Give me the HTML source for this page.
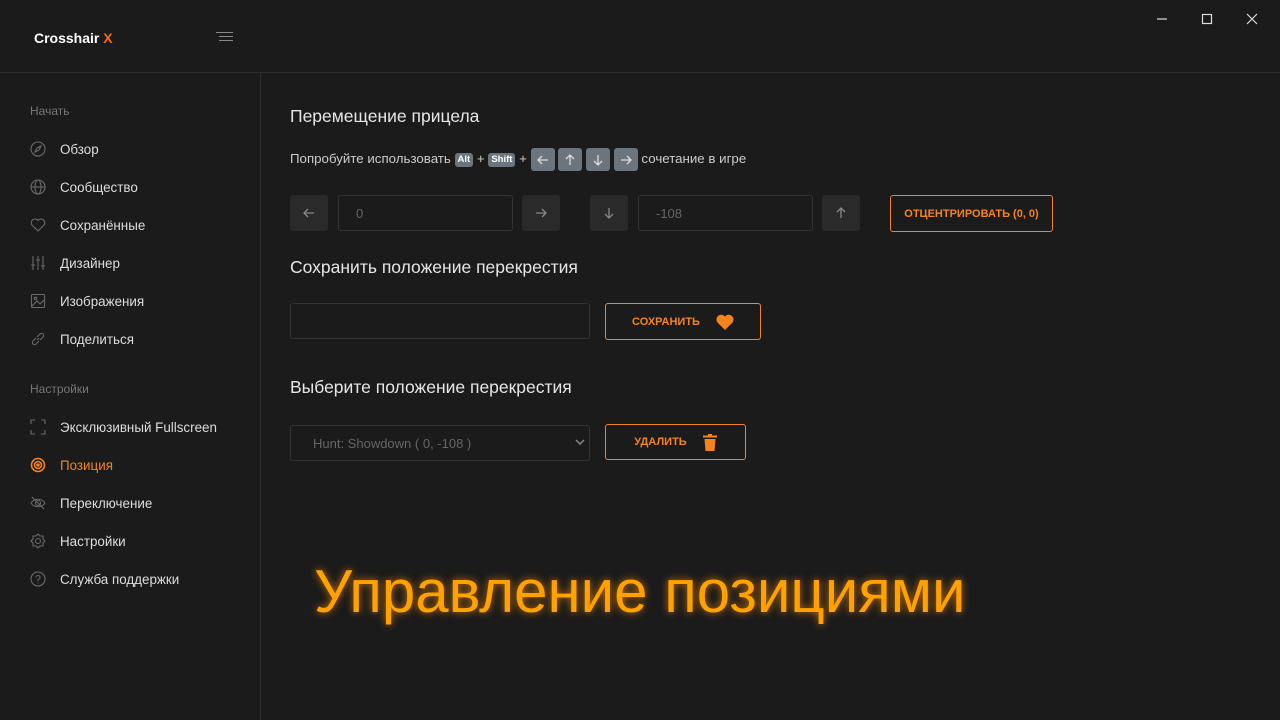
<!DOCTYPE html>
<html><head><meta charset="utf-8"><style>
*{margin:0;padding:0;box-sizing:border-box}
body{width:1280px;height:720px;background:#1b1b1b;font-family:"Liberation Sans",sans-serif;color:#ddd;position:relative;overflow:hidden}
.abs{position:absolute}
.hline{left:0;top:72px;width:1280px;height:1px;background:#2e2e2e}
.vline{left:260px;top:72px;width:1px;height:648px;background:#2e2e2e}
.logo{left:34px;top:30px;font-weight:bold;font-size:14px;color:#fff}
.logo b{color:#f26b1d}
.sec{left:30px;font-size:12px;color:#777}
.item{left:30px;font-size:13.4px;color:#ddd;display:flex;align-items:center;height:20px}
.item svg{width:16px;height:16px;margin-right:14px;stroke:#6a6a6a;fill:none;stroke-width:1.1}
.item.act{color:#f5841f}.item.act svg{stroke:#f5841f}
h2{position:absolute;left:290px;font-size:17.5px;font-weight:normal;color:#e6e6e6}
.kbd{display:inline-block;background:#6c757d;color:#fff;font-size:9.5px;font-weight:bold;border-radius:3px;padding:0 3px;line-height:14px;height:14px;vertical-align:middle}
.ak{display:inline-flex;width:24px;height:23px;background:#6c757d;border-radius:3px;align-items:center;justify-content:center;vertical-align:middle}
.sq{width:38px;height:36px;background:#2a2a2a;border-radius:3px;display:flex;align-items:center;justify-content:center}
.inp{height:36px;border:1px solid #333;border-radius:3px;color:#666;font-size:13px;padding:10px 17px}
.btn{border:1px solid #f5841f;border-radius:3px;color:#f5841f;font-size:11px;font-weight:bold;display:flex;align-items:center;justify-content:center}
.big{left:314px;top:557px;font-size:60px;color:#ffa200;text-shadow:0 0 8px rgba(255,140,0,.8);letter-spacing:0}
</style></head><body>
<svg width="0" height="0" style="position:absolute"><defs>
<path id="ar" d="M-5 0H5M1 -4L5 0 1 4" fill="none" stroke-width="1.3"/></defs></svg>
<div class="abs logo">Crosshair <b>X</b></div>
<svg class="abs" style="left:216px;top:31px" width="18" height="12" stroke="#888" stroke-width="1"><path d="M0 1.5H17M3 5.5H17M3 9.5H17"/></svg>
<svg class="abs" style="left:1157px;top:13px" width="110" height="12" stroke="#ddd" stroke-width="1.2" fill="none"><path d="M0 6H10"/><rect x="45.5" y="1.5" width="9" height="9"/><path d="M90 1L100 11M100 1L90 11"/></svg>
<div class="abs hline"></div><div class="abs vline"></div>

<div class="abs sec" style="top:104px">Начать</div>
<div class="abs item" style="top:139px"><svg viewBox="0 0 16 16"><circle cx="8" cy="8" r="7"/><path d="M11 5L9 9 5 11 7 7Z"/></svg>Обзор</div>
<div class="abs item" style="top:177px"><svg viewBox="0 0 16 16"><circle cx="8" cy="8" r="7"/><ellipse cx="8" cy="8" rx="3" ry="7"/><path d="M1 8H15"/></svg>Сообщество</div>
<div class="abs item" style="top:215px"><svg viewBox="0 0 16 16"><path d="M8 14L2 8A3.5 3.5 0 0 1 8 3.5 3.5 3.5 0 0 1 14 8Z"/></svg>Сохранённые</div>
<div class="abs item" style="top:253px"><svg viewBox="0 0 16 16"><path d="M3 1V15M8 1V15M13 1V15M1 10H5M6 5H10M11 11H15"/></svg>Дизайнер</div>
<div class="abs item" style="top:291px"><svg viewBox="0 0 16 16"><rect x="1.5" y="1.5" width="13" height="13" rx="1"/><circle cx="5.5" cy="5.5" r="1.3"/><path d="M2 13L7 8 10 11 14 7"/></svg>Изображения</div>
<div class="abs item" style="top:329px"><svg viewBox="0 0 16 16"><path d="M7 9L9 7M6 7L3 10A2 2 0 0 0 6 13L9 10M10 9L13 6A2 2 0 0 0 10 3L7 6"/></svg>Поделиться</div>

<div class="abs sec" style="top:382px">Настройки</div>
<div class="abs item" style="top:417px"><svg viewBox="0 0 16 16"><path d="M1 5V1H5M11 1H15V5M15 11V15H11M5 15H1V11"/></svg>Эксклюзивный Fullscreen</div>
<div class="abs item act" style="top:455px"><svg viewBox="0 0 16 16" style="stroke-width:1.6"><circle cx="8" cy="8" r="6.5"/><circle cx="8" cy="8" r="3.5"/><circle cx="8" cy="8" r="1" fill="#f5841f"/></svg>Позиция</div>
<div class="abs item" style="top:493px"><svg viewBox="0 0 16 16"><path d="M1 8C4 3 12 3 15 8 12 13 4 13 1 8ZM2 2L14 14"/><circle cx="8" cy="8" r="2.5"/></svg>Переключение</div>
<div class="abs item" style="top:531px"><svg viewBox="0 0 16 16"><circle cx="8" cy="8" r="2.5"/><path d="M8 1L10 3 13 3 13 6 15 8 13 10 13 13 10 13 8 15 6 13 3 13 3 10 1 8 3 6 3 3 6 3Z"/></svg>Настройки</div>
<div class="abs item" style="top:569px"><svg viewBox="0 0 16 16"><circle cx="8" cy="8" r="7"/><path d="M6 6.5A2 2 0 1 1 8 8.5V10M8 11.5V12.5"/></svg>Служба поддержки</div>

<h2 style="top:106px">Перемещение прицела</h2>
<div class="abs" style="left:290px;top:148px;font-size:13.3px;color:#ccc;line-height:22px;white-space:nowrap">Попробуйте использовать <span class="kbd">Alt</span> + <span class="kbd">Shift</span> + <span class="ak"><svg width="12" height="12" stroke="#ddd"><use href="#ar" transform="translate(6 6) rotate(180)"/></svg></span> <span class="ak"><svg width="12" height="12" stroke="#ddd"><use href="#ar" transform="translate(6 6) rotate(-90)"/></svg></span> <span class="ak"><svg width="12" height="12" stroke="#ddd"><use href="#ar" transform="translate(6 6) rotate(90)"/></svg></span> <span class="ak"><svg width="12" height="12" stroke="#ddd"><use href="#ar" transform="translate(6 6)"/></svg></span> сочетание в игре</div>

<div class="abs sq" style="left:290px;top:195px"><svg width="12" height="12" stroke="#888"><use href="#ar" transform="translate(6 6) rotate(180)"/></svg></div>
<div class="abs inp" style="left:338px;top:195px;width:175px">0</div>
<div class="abs sq" style="left:522px;top:195px"><svg width="12" height="12" stroke="#888"><use href="#ar" transform="translate(6 6)"/></svg></div>
<div class="abs sq" style="left:590px;top:195px"><svg width="12" height="12" stroke="#888"><use href="#ar" transform="translate(6 6) rotate(90)"/></svg></div>
<div class="abs inp" style="left:638px;top:195px;width:175px">-108</div>
<div class="abs sq" style="left:822px;top:195px"><svg width="12" height="12" stroke="#888"><use href="#ar" transform="translate(6 6) rotate(-90)"/></svg></div>
<div class="abs btn" style="left:890px;top:195px;width:163px;height:37px">ОТЦЕНТРИРОВАТЬ (0, 0)</div>

<h2 style="top:257px">Сохранить положение перекрестия</h2>
<div class="abs inp" style="left:290px;top:303px;width:300px"></div>
<div class="abs btn" style="left:605px;top:303px;width:156px;height:37px">СОХРАНИТЬ<svg style="margin-left:16px" width="18" height="16" viewBox="0 0 18 16"><path fill="#f5841f" d="M9 16L1.5 8.5A4.3 4.3 0 0 1 9 2.5 4.3 4.3 0 0 1 16.5 8.5Z"/></svg></div>

<h2 style="top:377px">Выберите положение перекрестия</h2>
<div class="abs inp" style="left:290px;top:425px;width:300px;color:#666;padding-left:22px">Hunt: Showdown ( 0, -108 )</div>
<svg class="abs" style="left:575px;top:438px" width="10" height="8" stroke="#888" fill="none" stroke-width="1.5"><path d="M1 2L5 6 9 2"/></svg>
<div class="abs btn" style="left:605px;top:424px;width:141px;height:36px">УДАЛИТЬ<svg style="margin-left:16px" width="14" height="17" viewBox="0 0 14 17"><path fill="#f5841f" d="M5 0H9V1.5H14V3.5H0V1.5H5ZM1.5 5H12.5L11.5 17H2.5Z"/></svg></div>

<div class="abs big">Управление позициями</div>
</body></html>
